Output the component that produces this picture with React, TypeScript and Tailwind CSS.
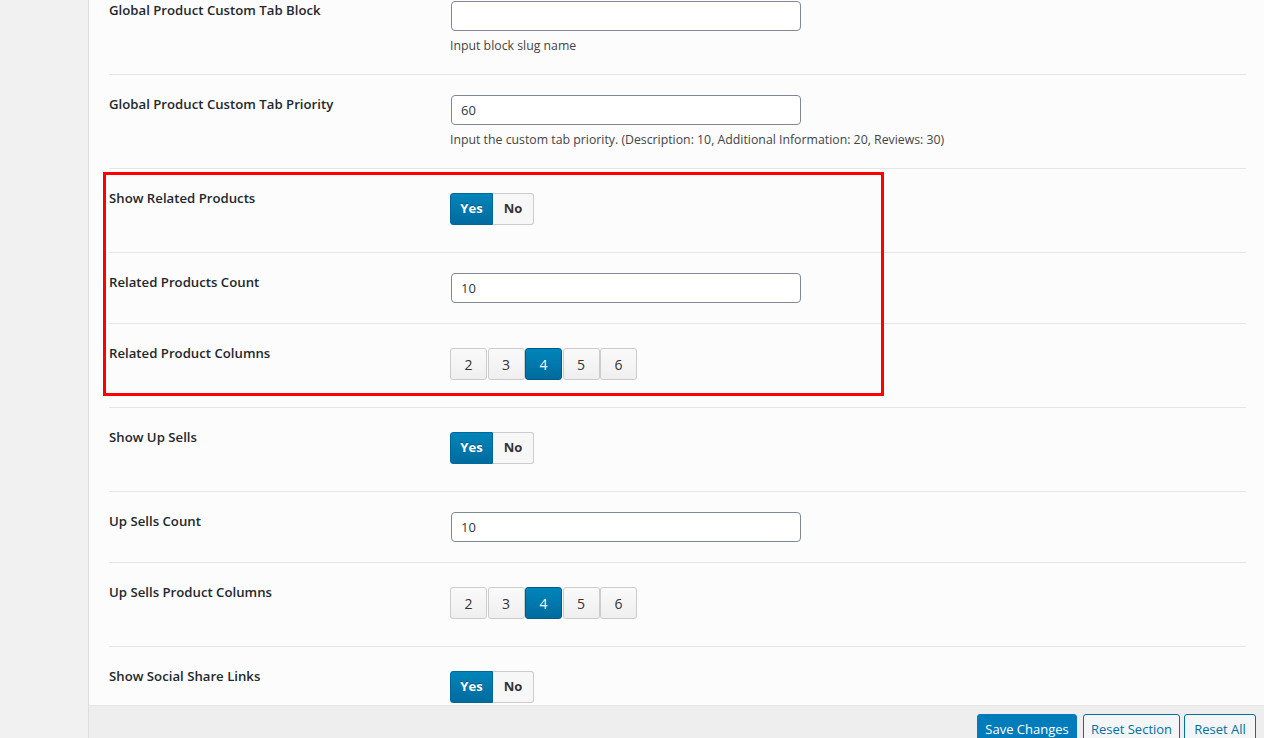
import React from 'react'

type Row =
  | { kind: 'input'; label: string; value: string; desc?: string }
  | { kind: 'switch'; label: string }
  | { kind: 'columns'; label: string; active: number }

const rows: Row[] = [
  { kind: 'input', label: 'Global Product Custom Tab Block', value: '', desc: 'Input block slug name' },
  {
    kind: 'input',
    label: 'Global Product Custom Tab Priority',
    value: '60',
    desc: 'Input the custom tab priority. (Description: 10, Additional Information: 20, Reviews: 30)',
  },
  { kind: 'switch', label: 'Show Related Products' },
  { kind: 'input', label: 'Related Products Count', value: '10' },
  { kind: 'columns', label: 'Related Product Columns', active: 4 },
  { kind: 'switch', label: 'Show Up Sells' },
  { kind: 'input', label: 'Up Sells Count', value: '10' },
  { kind: 'columns', label: 'Up Sells Product Columns', active: 4 },
  { kind: 'switch', label: 'Show Social Share Links' },
]

function TextField({ value }: { value: string }) {
  return (
    <div className="h-[30px] w-[350px] ml-px rounded-[4px] border border-[#7e8993] bg-white px-[9px] text-[13px] leading-[28px] text-[#32373c]">
      {value}
    </div>
  )
}

function YesNo() {
  return (
    <div className="flex h-8">
      <div className="flex w-[43px] items-center justify-center rounded-l-[3px] border border-[#006799] bg-gradient-to-b from-[#0085ba] to-[#006b9e] text-[13px] font-bold text-white [text-shadow:0_-1px_0_#005a82]">
        Yes
      </div>
      <div className="flex w-[41px] items-center justify-center rounded-r-[3px] border border-l-0 border-[#cccccc] bg-[#f7f7f7] text-[13px] font-bold text-[#333]">
        No
      </div>
    </div>
  )
}

function Columns({ active }: { active: number }) {
  return (
    <div className="flex h-8 gap-[0.5px]">
      {[2, 3, 4, 5, 6].map(n =>
        n === active ? (
          <div
            key={n}
            className="flex w-[37px] items-center justify-center rounded-[3px] border border-[#005a87] bg-gradient-to-b from-[#0085ba] to-[#006b9e] text-[14px] text-white"
          >
            {n}
          </div>
        ) : (
          <div
            key={n}
            className="flex w-[37px] items-center justify-center rounded-[3px] border border-[#cccccc] bg-gradient-to-b from-[#fafafa] to-[#efefef] text-[14px] text-[#333]"
          >
            {n}
          </div>
        )
      )}
    </div>
  )
}

export default function App() {
  return (
    <div className="relative flex h-[738px] overflow-hidden bg-[#f1f1f1] font-['Open_Sans',sans-serif]">
      <div className="w-[89px] shrink-0 border-r border-[#dddddd]" />

      <div className="flex flex-1 flex-col bg-[#fcfcfc]">
        {/* settings table */}
        <div className="flex-1 overflow-hidden">
          <div className="-mt-[19px] pl-5 pr-[18px]">
            {rows.map((row, i) => (
              <div key={i} className={`flex ${i > 0 ? 'border-t border-[#e6e6e6]' : ''}`}>
                <div className="w-[341px] shrink-0 pt-5 text-[13.2px] font-semibold leading-[18px] text-[#23282d]">
                  {row.label}
                </div>
                <div className="flex-1">
                  {row.kind === 'input' && (
                    <div className={`pt-5 ${row.desc ? 'pb-[19px]' : 'pb-5'}`}>
                      <TextField value={row.value} />
                      {row.desc && (
                        <p className="mt-[6px] text-[12.3px] leading-[18px] text-[#444]">{row.desc}</p>
                      )}
                    </div>
                  )}
                  {row.kind === 'switch' && (
                    <div className="pt-6 pb-[27px]">
                      <YesNo />
                    </div>
                  )}
                  {row.kind === 'columns' && (
                    <div className="pt-6 pb-[27px]">
                      <Columns active={row.active} />
                    </div>
                  )}
                </div>
              </div>
            ))}
          </div>
        </div>

        {/* footer actions */}
        <div className="flex h-[33px] shrink-0 justify-end gap-1 border-t border-[#e5e5e5] bg-[#eeeeee] pt-2 pr-2">
          <button className="mr-[2px] h-8 w-[100px] shrink-0 rounded-[3px] border border-[#007cba] bg-[#007cba] text-[13px] text-white">
            Save Changes
          </button>
          <button className="h-8 w-[97px] shrink-0 rounded-[3px] border border-[#0071a1] bg-[#f3f5f6] text-[13px] text-[#0071a1]">
            Reset Section
          </button>
          <button className="h-8 w-[72px] shrink-0 rounded-[3px] border border-[#0071a1] bg-[#f3f5f6] text-[13px] text-[#0071a1]">
            Reset All
          </button>
        </div>
      </div>

      {/* highlight annotation */}
      <div className="pointer-events-none absolute left-[103px] top-[172px] h-[224px] w-[781px] border-[3px] border-[#ff0000]" />
    </div>
  )
}
